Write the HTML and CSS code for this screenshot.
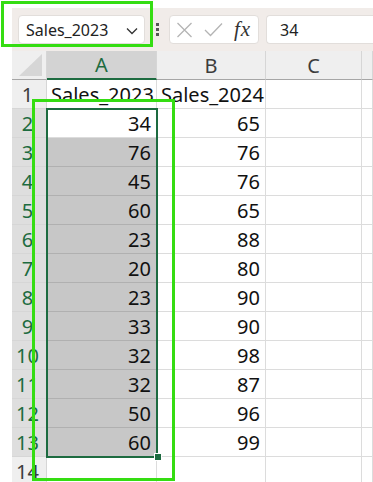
FILE: index.html
```html
<!DOCTYPE html>
<html lang="en">
<head>
    <meta charset="UTF-8">
    <title>Sheet</title>
    <link rel="stylesheet" href="styles.css">
</head>
<body>
    <div class="toolbar">
        <div class="name-box">
            <span class="name-text">Sales_2023</span>
            <svg class="chevron" width="12" height="8" viewBox="0 0 12 8"><path d="M1 1.5 L6 6.5 L11 1.5" fill="none" stroke="#333" stroke-width="1.3"/></svg>
        </div>
        <div class="dots"><i></i><i></i><i></i></div>
        <div class="fx-box">
            <svg width="17" height="16" viewBox="0 0 17 16"><path d="M1.5 1 L15.5 15 M15.5 1 L1.5 15" stroke="#b4b4b4" stroke-width="1.3"/></svg>
            <svg width="19" height="15" viewBox="0 0 19 15"><path d="M1 8 L6.5 13.5 L18 1.5" fill="none" stroke="#b4b4b4" stroke-width="1.3"/></svg>
            <span class="fx">fx</span>
        </div>
        <div class="formula">34</div>
    </div>

    <div class="sheet">
        <div class="grid">
            <div class="hd corner">
                <svg width="24" height="22" viewBox="0 0 24 22"><path d="M23 0 L23 22 L0 22 Z" fill="#d6d6d6"/></svg>
            </div>
            <div class="hd col sel">A</div>
            <div class="hd col">B</div>
            <div class="hd col">C</div>
            <div class="hd col"></div>

            <div class="hd row">1</div>
            <div class="c txt">Sales_2023</div>
            <div class="c txt">Sales_2024</div>
            <div class="c"></div>
            <div class="c"></div>

            <div class="hd row sel">2</div>
            <div class="c num">34</div>
            <div class="c num">65</div>
            <div class="c"></div>
            <div class="c"></div>

            <div class="hd row sel">3</div>
            <div class="c num hl">76</div>
            <div class="c num">76</div>
            <div class="c"></div>
            <div class="c"></div>

            <div class="hd row sel">4</div>
            <div class="c num hl">45</div>
            <div class="c num">76</div>
            <div class="c"></div>
            <div class="c"></div>

            <div class="hd row sel">5</div>
            <div class="c num hl">60</div>
            <div class="c num">65</div>
            <div class="c"></div>
            <div class="c"></div>

            <div class="hd row sel">6</div>
            <div class="c num hl">23</div>
            <div class="c num">88</div>
            <div class="c"></div>
            <div class="c"></div>

            <div class="hd row sel">7</div>
            <div class="c num hl">20</div>
            <div class="c num">80</div>
            <div class="c"></div>
            <div class="c"></div>

            <div class="hd row sel">8</div>
            <div class="c num hl">23</div>
            <div class="c num">90</div>
            <div class="c"></div>
            <div class="c"></div>

            <div class="hd row sel">9</div>
            <div class="c num hl">33</div>
            <div class="c num">90</div>
            <div class="c"></div>
            <div class="c"></div>

            <div class="hd row sel">10</div>
            <div class="c num hl">32</div>
            <div class="c num">98</div>
            <div class="c"></div>
            <div class="c"></div>

            <div class="hd row sel">11</div>
            <div class="c num hl">32</div>
            <div class="c num">87</div>
            <div class="c"></div>
            <div class="c"></div>

            <div class="hd row sel">12</div>
            <div class="c num hl">50</div>
            <div class="c num">96</div>
            <div class="c"></div>
            <div class="c"></div>

            <div class="hd row sel">13</div>
            <div class="c num hl">60</div>
            <div class="c num">99</div>
            <div class="c"></div>
            <div class="c"></div>

            <div class="hd row">14</div>
            <div class="c"></div>
            <div class="c"></div>
            <div class="c"></div>
            <div class="c"></div>
        </div>
        <div class="selection"></div>
        <div class="fill-handle"></div>
    </div>

    <div class="mark mark-name"></div>
    <div class="mark mark-range"></div>
</body>
</html>
```

FILE: styles.css
```css
* {
    margin: 0;
    padding: 0;
    box-sizing: border-box;
}

body {
    position: relative;
    width: 373px;
    height: 482px;
    overflow: hidden;
    background: #fff;
    font-family: "Noto Sans", "Open Sans", sans-serif;
    color: #111;
}

/* Formula bar */
.toolbar {
    display: flex;
    align-items: center;
    height: 43px;
    margin: 8px 0 0 12px;
    padding: 0 0 0 6px;
    background: #f1ece9;
}

.name-box {
    display: flex;
    align-items: center;
    justify-content: space-between;
    width: 127px;
    height: 29px;
    padding: 0 6px 0 7px;
    background: #fff;
    border: 1px solid #e2dedb;
    border-radius: 4px;
}

.name-text {
    font-size: 16px;
    color: #222;
}

.chevron {
    margin-top: 2px;
}

.dots {
    display: flex;
    flex-direction: column;
    gap: 2px;
    margin: 0 10px 0 11px;
}

.dots i {
    display: block;
    width: 3px;
    height: 3px;
    background: #555;
}

.fx-box {
    display: flex;
    align-items: center;
    gap: 11px;
    width: 90px;
    height: 29px;
    padding: 0 6px;
    background: #fff;
    border: 1px solid #e2dedb;
    border-radius: 4px;
}

.fx {
    font-family: "Liberation Serif", "DejaVu Serif", serif;
    font-style: italic;
    font-size: 21px;
    line-height: 1;
    color: #333;
    letter-spacing: 1px;
}

.formula {
    flex: 1;
    height: 29px;
    margin-left: 7px;
    padding-left: 13px;
    line-height: 28px;
    font-size: 16px;
    color: #222;
    background: #fff;
    border: 1px solid #e2dedb;
    border-right: none;
    border-radius: 4px 0 0 4px;
}

/* Sheet grid */
.sheet {
    position: relative;
    margin-left: 12px;
}

.grid {
    display: grid;
    grid-template-columns: 35px 110px 109px 96px 1fr;
    grid-auto-rows: 29px;
    font-size: 20px;
}

.hd {
    display: flex;
    align-items: center;
    justify-content: center;
    background: #efefef;
    color: #3c3c3c;
    border-right: 1px solid #d6d6d6;
    border-bottom: 1px solid #d6d6d6;
}

.corner {
    align-items: flex-end;
    justify-content: flex-end;
    padding: 0 3px 3px 0;
    border-bottom: 1px solid #a6a6a6;
}

.col {
    border-bottom: 1px solid #a6a6a6;
}

.col.sel {
    background: #d3d3d3;
    color: #1d6b40;
    border-bottom: 2px solid #1d6b40;
}

.row {
    padding-right: 3px;
}

.row.sel {
    background: #dedede;
    color: #1d6b40;
}

.c {
    display: flex;
    align-items: center;
    padding: 0 5px 0 4px;
    white-space: nowrap;
    border-right: 1px solid #dcdcdc;
    border-bottom: 1px solid #dcdcdc;
}

.num {
    justify-content: flex-end;
}

.hl {
    background: #c7c7c7;
    border-bottom-color: #b0b0b0;
}

.selection {
    position: absolute;
    left: 34px;
    top: 57px;
    width: 112px;
    height: 350px;
    border: 2px solid #1d6b40;
}

.fill-handle {
    position: absolute;
    left: 142px;
    top: 402px;
    width: 8px;
    height: 8px;
    background: #1d6b40;
    border: 1px solid #fff;
}

/* Annotation boxes */
.mark {
    position: absolute;
    border: 3px solid #35dd12;
}

.mark-name {
    left: 1px;
    top: 1px;
    width: 152px;
    height: 46px;
}

.mark-range {
    left: 32px;
    top: 99px;
    width: 143px;
    height: 382px;
}
```
